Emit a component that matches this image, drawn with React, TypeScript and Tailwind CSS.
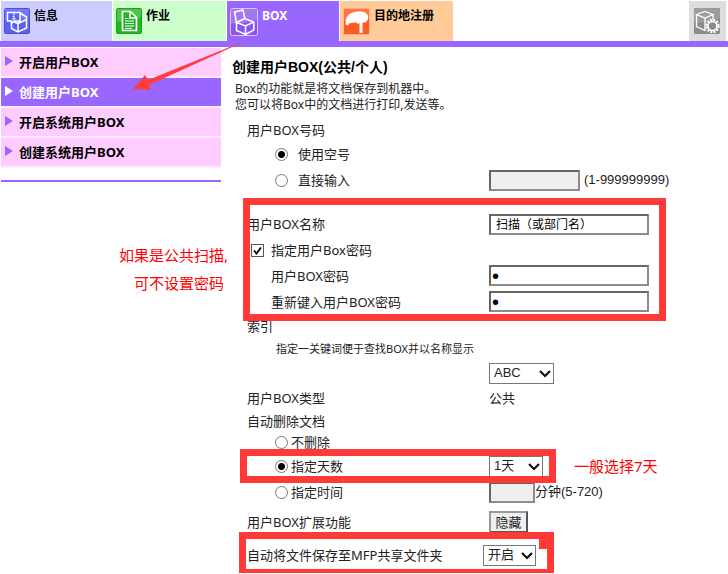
import type { ReactNode } from "react";

const tabs = [
  { label: "信息", bg: "bg-[#ccccff] text-black", width: "w-[111px]", icon: <InfoIcon /> },
  { label: "作业", bg: "bg-[#ccffcc] text-black", width: "w-[113px]", icon: <JobIcon /> },
  { label: "BOX", bg: "bg-[#9966ff] text-white", width: "w-[112px]", icon: <BoxIcon /> },
  { label: "目的地注册", bg: "bg-[#ffcc99] text-black", width: "w-[113px]", icon: <MailboxIcon /> },
];

const menu = ["开启用户BOX", "创建用户BOX", "开启系统用户BOX", "创建系统用户BOX"];

function InfoIcon() {
  return (
    <svg viewBox="0 0 26 26" className="size-[26px]" fill="none" aria-hidden="true">
      <rect x="0.5" y="0.5" width="25" height="25" rx="1.5" fill="#5a62f5" stroke="#4950d8" />
      <path d="M1 1h24v9Q13 14 1 12Z" fill="#7379fa" />
      <path d="M16 5l6.500 4v11l-8.500 4-6.500-3.500V14.500M14 24v-8.500l8.500-4M16 12.500l-2 3-4-1.500" stroke="#fff" strokeWidth="1.500" />
      <path d="M3.500 4.500h12.500v8.500h-6l-2.500 2.500V13h-4Z" fill="#5a62f5" stroke="#fff" strokeWidth="1.500" />
      <path d="M9 6.300h1.800M8.600 8.300h1.400v2.500M8.200 11h3.500" stroke="#fff" strokeWidth="1.100" />
    </svg>
  );
}

function JobIcon() {
  return (
    <svg viewBox="0 0 26 26" className="size-[26px]" fill="none" aria-hidden="true">
      <rect x="0.5" y="0.5" width="25" height="25" rx="1.5" fill="#22b422" stroke="#1fa01f" />
      <path d="M1 1h24v8Q13 15 1 13Z" fill="#48c748" />
      <path d="M6.500 3.500h8l6 6v13h-14Z" fill="#22b422" stroke="#fff" strokeWidth="1.700" />
      <path d="M14 3.500v6.500h6.500" stroke="#fff" strokeWidth="1.500" />
      <path d="M9 10.500h3.500M9 13h9M9 15.500h9M9 18h9M9 20.500h7" stroke="#fff" strokeWidth="1.200" />
    </svg>
  );
}

function BoxIcon() {
  return (
    <svg viewBox="0 0 28 28" className="size-7" fill="none" stroke="#fff" aria-hidden="true">
      <rect x="0.5" y="0.5" width="27" height="27" rx="2" fill="#8a55ec" stroke="#d9c8ff" />
      <path d="M1 1h26v10Q14 17 1 15Z" fill="#a079f2" stroke="none" />
      <path d="M6.500 14.500L4.500 4 13 2l1.800 8.500" strokeWidth="1.500" />
      <path d="M6.500 14.500l8.300-4 9 3.500-8.300 4ZM6.500 14.500v8l9 4 8.300-4.500v-8M15.500 18v8.500" strokeWidth="1.500" />
    </svg>
  );
}

function MailboxIcon() {
  return (
    <svg viewBox="0 0 27 27" className="size-[27px]" fill="none" aria-hidden="true">
      <rect x="0.5" y="0.5" width="26" height="26" rx="1.5" fill="#ff5b25" stroke="#ffb38c" />
      <path d="M1 1h25v9Q14 14 1 13Z" fill="#ff7444" />
      <path d="M2.500 16.500c0-6 2-10 6-11.500 7-2.500 15-2 16.500 3 .7 3-.5 5-3 6.500h-5.500l-1.500 2-1-2-7 .500-2 2.500Z" fill="#fff" />
      <path d="M16.500 14h3v11h-3Z" fill="#fff" />
    </svg>
  );
}

function SettingsIcon() {
  return (
    <svg viewBox="0 0 26 26" className="size-[26px]" fill="none" stroke="#fff" aria-hidden="true">
      <rect width="26" height="26" rx="1.5" fill="#8c8c8c" stroke="none" />
      <path d="M0 0h26v10Q13 16 0 14Z" fill="#9c9c9c" stroke="none" />
      <path d="M2.500 6.500L11 3.500l8 3-8 3.500ZM2.500 6.500v12l8.500 4V10M19 6.500V12" strokeWidth="1.300" />
      <circle cx="18.500" cy="18" r="6" fill="#8c8c8c" strokeWidth="2.400" strokeDasharray="1.900 1.240" />
      <circle cx="18.500" cy="18" r="4.500" fill="#8c8c8c" strokeWidth="1.600" />
    </svg>
  );
}

function Row({ height, label, indent = "", children }: { height: string; label: ReactNode; indent?: string; children?: ReactNode }) {
  return (
    <div className={`flex items-center ${height}`}>
      <div className={`w-[242px] shrink-0 ${indent}`}>{label}</div>
      {children}
    </div>
  );
}

function Radio({ name, label, gap, checked }: { name: string; label: string; gap: string; checked?: boolean }) {
  return (
    <label className={`flex items-center ${gap}`}>
      <input
        type="radio"
        name={name}
        defaultChecked={checked}
        className="size-[13px] shrink-0 appearance-none rounded-full border border-[#777] bg-white checked:bg-[radial-gradient(circle,#000_0_3px,transparent_4px)]"
      />
      {label}
    </label>
  );
}

function Field({ id, width, type = "text", value, disabled, label }: { id: string; width: string; type?: string; value?: string; disabled?: boolean; label?: string }) {
  return (
    <input
      id={id}
      type={type}
      defaultValue={value}
      disabled={disabled}
      aria-label={label}
      className={`h-[21px] border-2 border-t-[#666] border-r-[#8c8c8c] border-b-[#8c8c8c] border-l-[#666] bg-white disabled:bg-[#efefef] ${width}`}
    />
  );
}

function Select({ id, width, options, label }: { id: string; width: string; options: string[]; label?: string }) {
  return (
    <div className={`relative ${width}`}>
      <select
        id={id}
        aria-label={label}
        className="block h-[21px] w-full appearance-none border border-[#777] bg-white pl-1 font-['Liberation_Sans','Noto_Sans_CJK_SC',sans-serif] text-[13px] leading-[18px] text-[#222]"
      >
        {options.map((option) => (
          <option key={option}>{option}</option>
        ))}
      </select>
      <svg viewBox="0 0 12 8" className="pointer-events-none absolute top-[7px] right-[3px] h-2 w-3" fill="none" aria-hidden="true">
        <path d="M1 1l5 5 5-5" stroke="#111" strokeWidth="2.200" />
      </svg>
    </div>
  );
}

export default function App() {
  return (
    <div className="relative min-h-screen overflow-hidden bg-white font-['Noto_Sans','Noto_Sans_CJK_SC',sans-serif] text-[13px] leading-5 text-[#222]">
      <header className="border-b-[6px] border-[#9966ff] pt-px pr-0.5 pl-px">
        <nav className="flex h-10 gap-px">
          {tabs.map((tab) => (
            <a key={tab.label} href="#" className={`flex pt-[7px] pl-[3px] text-xs leading-4 font-bold ${tab.width} ${tab.bg}`}>
              <span className="shrink-0">{tab.icon}</span>
              <span className="pl-1">{tab.label}</span>
            </a>
          ))}
          <a href="#" aria-label="设置" className="ml-auto flex w-[37px] bg-[#dddddd] pt-[7px] pl-[5px]">
            <SettingsIcon />
          </a>
        </nav>
      </header>

      <div className="flex">
        <aside className="w-[221px] shrink-0 pl-px">
          <ul className="border-b-2 border-[#9966ff] pt-px pb-3">
            {menu.map((item) => (
              <li key={item} className="border-b-2 border-[#ffeaff]">
                <a
                  href="#"
                  className={`flex h-7 gap-[6px] pl-1 font-bold ${item === "创建用户BOX" ? "bg-[#9966ff] text-white" : "bg-[#ffccff] text-black"}`}
                >
                  <svg viewBox="0 0 8 10" className={`mt-2 h-[10px] w-2 ${item === "创建用户BOX" ? "fill-white" : "fill-[#9966ff]"}`} aria-hidden="true">
                    <path d="M0 0l8 5-8 5Z" />
                  </svg>
                  <span className="pt-1">{item}</span>
                </a>
              </li>
            ))}
          </ul>
          <p className="mt-[59px] ml-[118px] text-[15px] leading-7 whitespace-nowrap text-[#ff0000]">
            如果是公共扫描,
            <span className="block pl-[15px]">可不设置密码</span>
          </p>
        </aside>

        <main className="min-w-0 flex-1 pt-[10px] pl-[11px]">
          <h1 className="font-['Liberation_Sans','Noto_Sans_CJK_SC',sans-serif] text-sm leading-5 font-bold text-black">创建用户BOX(公共/个人)</h1>
          <div className="mt-1 pl-[3px] text-xs leading-4">
            <p>Box的功能就是将文档保存到机器中。</p>
            <p>您可以将Box中的文档进行打印,发送等。</p>
          </div>

          <form className="mt-[5px] pl-[15px] whitespace-nowrap">
            <Row height="h-6" label="用户BOX号码" />
            <Row height="h-6" indent="pl-7" label={<Radio name="number" label="使用空号" gap="gap-[10px]" checked />} />
            <Row height="h-7" indent="pl-7" label={<Radio name="number" label="直接输入" gap="gap-[10px]" />}>
              <Field id="number" width="w-[91px]" label="用户BOX号码" disabled />
              <span className="pl-1 font-['Liberation_Sans',sans-serif]">(1-999999999)</span>
            </Row>

            <section className="relative mt-1 pt-[13px]">
              <Row height="h-[26px]" label={<label htmlFor="name">用户BOX名称</label>}>
                <Field id="name" width="w-[160px] pl-[5px] text-xs text-black" value="扫描（或部门名）" />
              </Row>
              <Row
                height="h-[26px]"
                indent="pl-1"
                label={
                  <label className="flex items-center gap-[7px]">
                    <span className="relative flex">
                      <input type="checkbox" defaultChecked className="peer size-[13px] appearance-none border border-[#555] bg-white" />
                      <svg viewBox="0 0 13 13" className="pointer-events-none absolute inset-0 hidden size-[13px] peer-checked:block" fill="none" aria-hidden="true">
                        <path d="M3 6.500l2.500 3L10 3.500" stroke="#000" strokeWidth="1.800" />
                      </svg>
                    </span>
                    指定用户Box密码
                  </label>
                }
              />
              <Row height="h-[25px]" indent="pl-6" label={<label htmlFor="password">用户BOX密码</label>}>
                <Field id="password" width="w-[160px] pl-px font-['Liberation_Sans',sans-serif] text-xl text-black" type="password" value="1" />
              </Row>
              <Row height="h-[27px]" indent="pl-6" label={<label htmlFor="confirm">重新键入用户BOX密码</label>}>
                <Field id="confirm" width="w-[160px] pl-px font-['Liberation_Sans',sans-serif] text-xl text-black" type="password" value="1" />
              </Row>
              <div className="pointer-events-none absolute top-0 -bottom-[6px] -left-1 w-[423px] border-[7px] border-[#ff3838]" />
            </section>

            <Row height="h-[22px]" label={<label htmlFor="index">索引</label>} />
            <p className="h-6 pl-[29px] text-[11px] leading-6">指定一关键词便于查找BOX并以名称显示</p>
            <Row height="h-6" label="">
              <Select id="index" width="w-[65px]" options={["ABC", "DEF", "GHI"]} />
            </Row>
            <Row height="h-[26px]" label="用户BOX类型">公共</Row>
            <Row height="h-5" label="自动删除文档" />
            <Row height="h-[22px]" indent="pl-7" label={<Radio name="delete" label="不删除" gap="gap-[3px]" />} />
            <div className="relative">
              <Row height="h-[26px]" indent="pl-7" label={<Radio name="delete" label="指定天数" gap="gap-[3px]" checked />}>
                <Select id="days" width="w-[54px]" options={["1天", "2天", "3天", "7天"]} label="指定天数" />
                <span className="pl-[31px] text-[15px] text-[#ff0000]">一般选择7天</span>
              </Row>
              <div className="pointer-events-none absolute -top-1 -bottom-1 -left-[7px] w-[316px] border-[7px] border-[#ff3838]" />
            </div>
            <Row height="h-[26px]" indent="pl-7" label={<Radio name="delete" label="指定时间" gap="gap-[3px]" />}>
              <Field id="minutes" width="w-[46px]" label="分钟" disabled />
              <span className="font-['Liberation_Sans','Noto_Sans_CJK_SC',sans-serif]">分钟(5-720)</span>
            </Row>
            <Row height="h-[34px]" label="用户BOX扩展功能">
              <button type="button" className="h-[22px] w-[39px] border-2 border-t-[#999] border-r-[#555] border-b-[#555] border-l-[#999] bg-[#efefef] leading-[18px]">
                隐藏
              </button>
            </Row>
            <div className="relative flex h-8 items-center">
              <label htmlFor="share" className="w-[236px] shrink-0">自动将文件保存至MFP共享文件夹</label>
              <Select id="share" width="w-[53px]" options={["开启", "关闭"]} />
              <div className="pointer-events-none absolute -top-[7px] -bottom-[2px] -left-2 flex w-[315px] justify-end border-[7px] border-b-4 border-[#ff3838]">
                <div className="h-[10px] w-2 bg-[#ff3838]" />
              </div>
            </div>
          </form>
        </main>
      </div>

      <svg viewBox="0 0 124 56" className="pointer-events-none absolute top-9 left-[132px] h-14 w-[124px]" aria-hidden="true">
        <path d="M1 53L13 39l3 5L120 2 17 49l2 5Z" fill="#ff3d3d" />
      </svg>
    </div>
  );
}
